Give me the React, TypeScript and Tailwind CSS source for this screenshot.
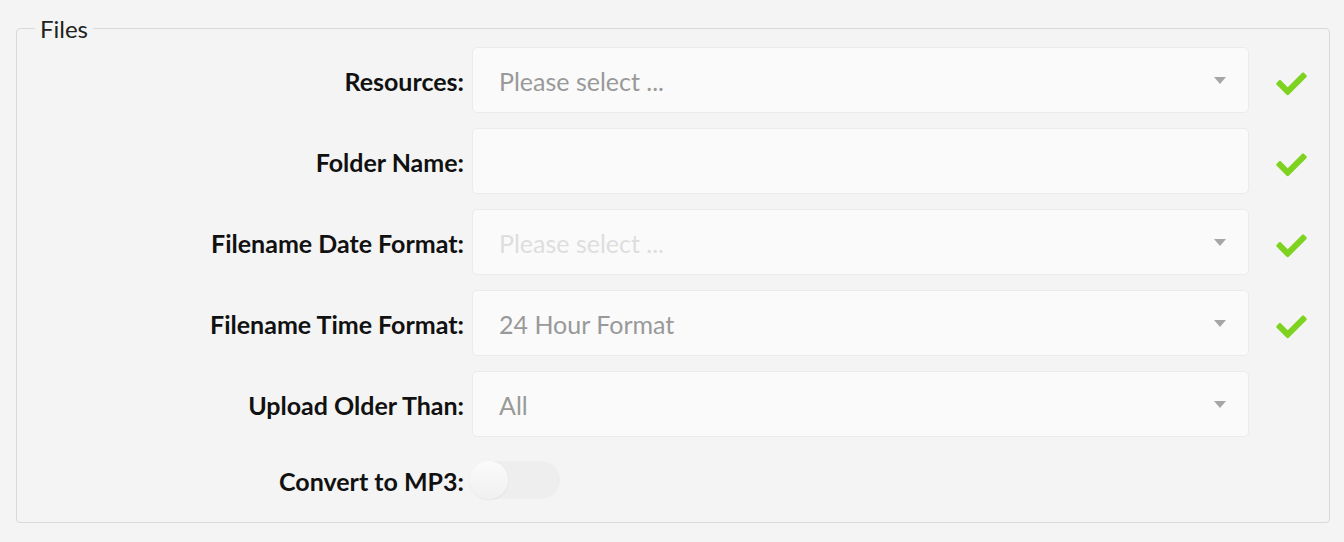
import React from "react";

const Check = () => (
  <svg width="31" height="25" viewBox="0 40 512 420" className="block">
    <path
      fill="#7ed321"
      d="M173.898 439.404l-166.4-166.4c-9.997-9.997-9.997-26.206 0-36.204l36.203-36.204c9.997-9.998 26.207-9.998 36.204 0L192 312.69 432.095 72.596c9.997-9.997 26.207-9.997 36.204 0l36.203 36.204c9.997 9.997 9.997 26.206 0 36.204l-294.4 294.401c-9.998 9.997-26.207 9.997-36.204-.001z"
    />
  </svg>
);

const Caret = () => (
  <svg width="12" height="7" viewBox="0 0 12 7" className="block">
    <path d="M0 0h12L6 7z" fill="#a6a6a6" />
  </svg>
);

type RowProps = {
  label: string;
  value?: string;
  valueColor?: string;
  select?: boolean;
  check?: boolean;
};

const Row = ({ label, value, valueColor, select = true, check = true }: RowProps) => (
  <div className="flex items-center h-[66px]">
    <div className="w-[455px] pr-2 pt-[3px] text-right font-bold text-[25px] text-[#111]">{label}</div>
    <div className="w-[777px] h-[66px] rounded-[5px] border border-[#ebebeb] bg-[#fafafa] flex items-center pl-[26px] pr-[22px]">
      <span className={`flex-1 pt-[3px] text-[25px] ${valueColor ?? "text-[#999]"}`}>{value ?? ""}</span>
      {select && <Caret />}
    </div>
    <div className="w-[80px] pl-[27px] pt-[6px] flex items-center">{check && <Check />}</div>
  </div>
);

export default function App() {
  return (
    <div
      className="min-h-[542px] bg-[#f4f4f4] pt-[16px] pl-4 pr-[14px]"
      style={{ fontFamily: "Lato, 'Open Sans', sans-serif" }}
    >
      <fieldset className="border border-[#d9d9d9] rounded-[4px] pl-0 pr-0 pb-[24px] h-[507px]">
        <legend className="ml-[18px] px-[5px] text-[24px] text-[#222] leading-[24px]">
          <span className="relative top-[1px]">Files</span>
        </legend>
        <div className="flex flex-col gap-[15px] mt-[7px]">
          <Row label="Resources:" value="Please select ..." />
          <Row label="Folder Name:" select={false} />
          <Row label="Filename Date Format:" value="Please select ..." valueColor="text-[#dedede]" />
          <Row label="Filename Time Format:" value="24 Hour Format" />
          <Row label="Upload Older Than:" value="All" check={false} />
          <div className="flex items-center h-[38px] mt-[9px]">
            <div className="w-[455px] pr-2 pt-[3px] text-right font-bold text-[25px] text-[#111]">Convert to MP3:</div>
            <div className="-ml-[2px] w-[90px] h-[38px] rounded-full bg-[#eeeeee] relative">
              <div className="absolute left-0 top-0 w-[38px] h-[38px] rounded-full bg-gradient-to-b from-[#fbfbfb] to-[#f0f0f0] shadow-[0_1px_2px_rgba(0,0,0,0.06)]" />
            </div>
          </div>
        </div>
      </fieldset>
    </div>
  );
}
